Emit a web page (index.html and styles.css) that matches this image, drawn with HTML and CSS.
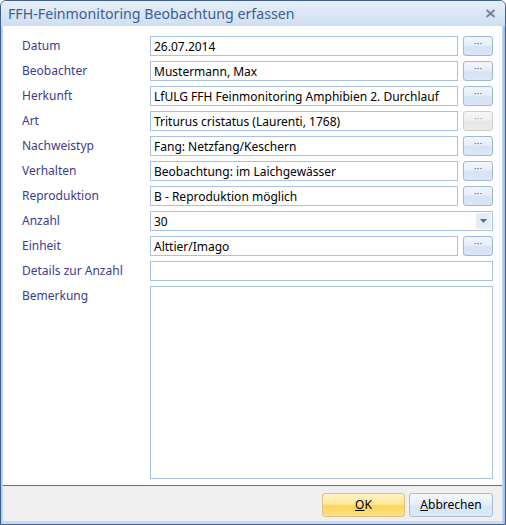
FILE: index.html
```html
<!DOCTYPE html>
<html lang="de">
<head>
<meta charset="utf-8">
<title>FFH-Feinmonitoring Beobachtung erfassen</title>
<link rel="stylesheet" href="styles.css">
</head>
<body>
<div class="window">
  <div class="titlebar">
    <span class="title">FFH-Feinmonitoring Beobachtung erfassen</span>
    <span class="close"><svg width="11" height="9" viewBox="0 0 11 9"><path d="M1.5 1 L9.5 8 M9.5 1 L1.5 8" stroke="#74869c" stroke-width="2" fill="none"/></svg></span>
  </div>
  <div class="frame">
    <div class="content">
      <div class="form">
        <label class="lbl">Datum</label>
        <div class="field">26.07.2014</div><button class="dots">···</button>

        <label class="lbl">Beobachter</label>
        <div class="field">Mustermann, Max</div><button class="dots">···</button>

        <label class="lbl">Herkunft</label>
        <div class="field">LfULG FFH Feinmonitoring Amphibien 2. Durchlauf</div><button class="dots">···</button>

        <label class="lbl">Art</label>
        <div class="field">Triturus cristatus (Laurenti, 1768)</div><button class="dots disabled">···</button>

        <label class="lbl">Nachweistyp</label>
        <div class="field">Fang: Netzfang/Keschern</div><button class="dots">···</button>

        <label class="lbl">Verhalten</label>
        <div class="field">Beobachtung: im Laichgewässer</div><button class="dots">···</button>

        <label class="lbl">Reproduktion</label>
        <div class="field">B - Reproduktion möglich</div><button class="dots">···</button>

        <label class="lbl">Anzahl</label>
        <div class="field combo"><span>30</span><span class="arrow"><svg width="7" height="4" viewBox="0 0 7 4"><path d="M0 0 H7 L3.5 4 Z" fill="#4d6f9e"/></svg></span></div>

        <label class="lbl">Einheit</label>
        <div class="field">Alttier/Imago</div><button class="dots">···</button>

        <label class="lbl">Details zur Anzahl</label>
        <div class="field wide"></div>

        <label class="lbl top">Bemerkung</label>
        <div class="field wide memo"></div>
      </div>
    </div>
    <div class="footer">
      <button class="btn ok"><u>O</u>K</button>
      <button class="btn cancel"><u>A</u>bbrechen</button>
    </div>
  </div>
</div>
</body>
</html>
```

FILE: styles.css
```css
html, body {
  margin: 0;
  padding: 0;
  background: #ffffff;
}

body {
  font-family: "Noto Sans", "Open Sans", sans-serif;
  font-size: 12px;
}

.window {
  width: 506px;
  height: 525px;
  box-sizing: border-box;
  display: flex;
  flex-direction: column;
  border: 1px solid #3f5f8c;
  border-radius: 6px 6px 0 0;
  background: #c4d8f0;
  overflow: hidden;
}

.titlebar {
  height: 25px;
  flex: none;
  display: flex;
  align-items: center;
  justify-content: space-between;
  padding: 0 9px 0 7px;
  background: linear-gradient(#e6eef9 0%, #dae6f5 50%, #cedff3 100%);
}

.title {
  font-size: 14.2px;
  color: #3f5d8c;
  margin-top: -1px;
}

.close {
  display: flex;
  align-items: center;
  margin-top: -1px;
}

.frame {
  flex: 1;
  display: flex;
  flex-direction: column;
  padding: 0 3px 3px 2px;
  background: linear-gradient(90deg, #a9c4e8 0, #c8dbf2 2px, #c8dbf2 calc(100% - 3px), #9bb9e2 100%);
}

.content {
  flex: 1;
  background: #ffffff;
  padding: 10px 9px 6px 19px;
  display: flex;
  flex-direction: column;
}

.form {
  flex: 1;
  display: grid;
  grid-template-columns: 123px 308px 30px;
  grid-template-rows: repeat(10, 20px) 1fr;
  column-gap: 5px;
  row-gap: 5px;
}

.lbl {
  grid-column: 1;
  color: #3c3c8c;
  font-size: 12px;
  display: flex;
  align-items: center;
  margin-top: -1px;
}

.lbl.top {
  align-items: flex-start;
  padding-top: 2px;
}

.field {
  box-sizing: border-box;
  height: 20px;
  border: 1px solid #a9c2e2;
  background: #ffffff;
  color: #000000;
  padding: 0 3px;
  display: flex;
  align-items: center;
  white-space: nowrap;
  overflow: hidden;
}

.field.wide {
  grid-column: 2 / 4;
}

.field.memo {
  height: auto;
}

.combo {
  grid-column: 2 / 4;
  justify-content: space-between;
  padding-right: 1px;
}

.arrow {
  width: 15px;
  height: 16px;
  background: #e4edf8;
  display: flex;
  align-items: center;
  justify-content: center;
}

.dots {
  box-sizing: border-box;
  height: 20px;
  margin: 0;
  padding: 0 0 4px 0;
  border: 1px solid #9fb8d8;
  border-radius: 3px;
  background: linear-gradient(#f2f7fd 0%, #e6eef9 45%, #d5e3f5 55%, #dbe7f7 100%);
  color: #2a3a55;
  font-family: "DejaVu Sans", sans-serif;
  font-size: 9px;
  line-height: 1;
  display: flex;
  align-items: center;
  justify-content: center;
}

.dots.disabled {
  border-color: #cfcfcf;
  background: linear-gradient(#f7f7f7 0%, #efefef 45%, #e6e6e6 55%, #ebebeb 100%);
  color: #8c8c8c;
}

.footer {
  height: 36px;
  flex: none;
  box-sizing: border-box;
  border-top: 1px solid #6f6f6f;
  background: #efefef;
  display: flex;
  justify-content: flex-end;
  align-items: flex-start;
  gap: 4px;
  padding: 7px 9px 0 0;
}

.btn {
  box-sizing: border-box;
  width: 84px;
  height: 24px;
  margin: 0;
  border-radius: 3px;
  font-family: "Noto Sans", "Open Sans", sans-serif;
  font-size: 12px;
  color: #000000;
  display: flex;
  align-items: center;
  justify-content: center;
  padding: 0 0 1px 0;
}

.btn.ok {
  width: 83px;
  border: 1px solid #dcc07c;
  background: linear-gradient(#fff3c4 0%, #fde89a 45%, #fcd55c 55%, #fde08a 100%);
}

.btn.cancel {
  border: 1px solid #a6bddb;
  background: linear-gradient(#f3f7fc 0%, #e8eff9 45%, #d8e5f5 55%, #dfe9f7 100%);
}
```
